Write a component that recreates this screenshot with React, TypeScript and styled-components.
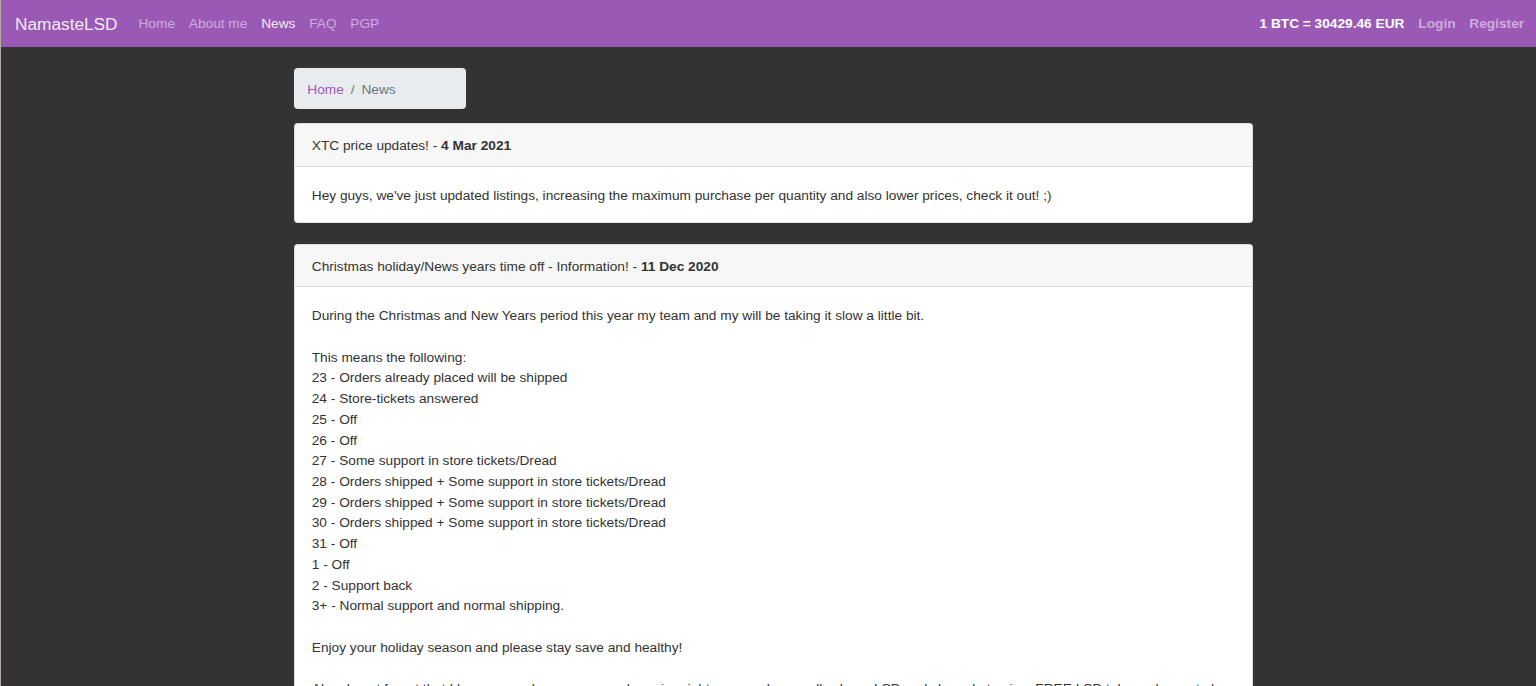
import React from "react";
import styled, { createGlobalStyle } from "styled-components";

const GlobalStyle = createGlobalStyle`
  html, body {
    margin: 0;
    padding: 0;
  }
  body {
    background: #333333;
    font-family: "Liberation Sans", Arial, Helvetica, sans-serif;
    font-size: 13.7px;
    line-height: 20.7px;
    color: #333333;
    border-left: 1px solid #b3aba1;
    min-height: 100vh;
    box-sizing: border-box;
  }
  * { box-sizing: border-box; }
`;

const Navbar = styled.nav`
  height: 47px;
  background: #9b59b6;
  display: flex;
  align-items: center;
  justify-content: space-between;
  padding: 2px 5px 0 14px;
`;

const NavGroup = styled.div`
  display: flex;
  align-items: center;
`;

const Brand = styled.a`
  font-size: 17.25px;
  color: rgba(255, 255, 255, 0.9);
  text-decoration: none;
  margin-right: 14px;
  white-space: nowrap;
`;

const NavLink = styled.a<{ $active?: boolean; $bold?: boolean }>`
  font-size: 13.7px;
  padding: 0 6.9px;
  text-decoration: none;
  white-space: nowrap;
  font-weight: ${(p) => (p.$bold ? 700 : 400)};
  color: ${(p) => (p.$active ? "rgba(255,255,255,0.92)" : "rgba(255,255,255,0.5)")};
`;

const Rate = styled.span`
  font-weight: 700;
  color: #ffffff;
  font-size: 13.7px;
  margin-right: 7px;
  white-space: nowrap;
`;

const Container = styled.main`
  max-width: 968px;
  margin: 0 auto;
  padding: 21px 0 0 9px;
`;

const Breadcrumb = styled.ol`
  display: inline-flex;
  list-style: none;
  margin: 0 0 14px 0;
  padding: 12.35px 13.8px 8.35px;
  width: 172px;
  height: 41.4px;
  background: #e9ecef;
  border-radius: 4px;
  color: #6c757d;
`;

const Crumb = styled.li`
  display: flex;
  &:not(:first-child)::before {
    content: "/";
    padding: 0 6.9px;
    color: #6c757d;
  }
`;

const CrumbLink = styled.a`
  color: #9b59b6;
  text-decoration: none;
`;

const Card = styled.section`
  background: #ffffff;
  border: 1px solid rgba(0, 0, 0, 0.125);
  border-radius: 4px;
  margin-bottom: 21px;
  overflow: hidden;
`;

const CardHeader = styled.header`
  background: #f7f7f7;
  border-bottom: 1px solid rgba(0, 0, 0, 0.125);
  padding: 12px 17.25px 8.7px;
  color: #333333;

  b {
    font-weight: 700;
  }
`;

const CardBody = styled.div`
  padding: 19px 17.25px 15.5px;
  color: #333333;
`;

const Para = styled.p`
  margin: 0 0 20.7px 0;
  &:last-child {
    margin-bottom: 0;
  }
`;

const news = [
  {
    title: "XTC price updates!",
    date: "4 Mar 2021",
    paragraphs: [
      [
        "Hey guys, we've just updated listings, increasing the maximum purchase per quantity and also lower prices, check it out! ;)",
      ],
    ],
  },
  {
    title: "Christmas holiday/News years time off - Information!",
    date: "11 Dec 2020",
    paragraphs: [
      [
        "During the Christmas and New Years period this year my team and my will be taking it slow a little bit.",
      ],
      [
        "This means the following:",
        "23 - Orders already placed will be shipped",
        "24 - Store-tickets answered",
        "25 - Off",
        "26 - Off",
        "27 - Some support in store tickets/Dread",
        "28 - Orders shipped + Some support in store tickets/Dread",
        "29 - Orders shipped + Some support in store tickets/Dread",
        "30 - Orders shipped + Some support in store tickets/Dread",
        "31 - Off",
        "1 - Off",
        "2 - Support back",
        "3+ - Normal support and normal shipping.",
      ],
      ["Enjoy your holiday season and please stay save and healthy!"],
      [
        "Also do not forget that I have several promos up and running right now, such as really cheap LSD and cheap ketamine, FREE LSD tabs and soon to be released new products!",
      ],
      ["Much love, NamasteLSD"],
    ],
  },
];

export default function App() {
  return (
    <>
      <GlobalStyle />
      <Navbar>
        <NavGroup>
          <Brand href="#">NamasteLSD</Brand>
          <NavLink href="#">Home</NavLink>
          <NavLink href="#">About me</NavLink>
          <NavLink href="#" $active>
            News
          </NavLink>
          <NavLink href="#">FAQ</NavLink>
          <NavLink href="#">PGP</NavLink>
        </NavGroup>
        <NavGroup>
          <Rate>1 BTC = 30429.46 EUR</Rate>
          <NavLink href="#" $bold>
            Login
          </NavLink>
          <NavLink href="#" $bold>
            Register
          </NavLink>
        </NavGroup>
      </Navbar>
      <Container>
        <Breadcrumb>
          <Crumb>
            <CrumbLink href="#">Home</CrumbLink>
          </Crumb>
          <Crumb>News</Crumb>
        </Breadcrumb>
        {news.map((item) => (
          <Card key={item.title}>
            <CardHeader>
              {item.title} - <b>{item.date}</b>
            </CardHeader>
            <CardBody>
              {item.paragraphs.map((lines, i) => (
                <Para key={i}>
                  {lines.map((line, j) => (
                    <React.Fragment key={j}>
                      {j > 0 && <br />}
                      {line}
                    </React.Fragment>
                  ))}
                </Para>
              ))}
            </CardBody>
          </Card>
        ))}
      </Container>
    </>
  );
}
